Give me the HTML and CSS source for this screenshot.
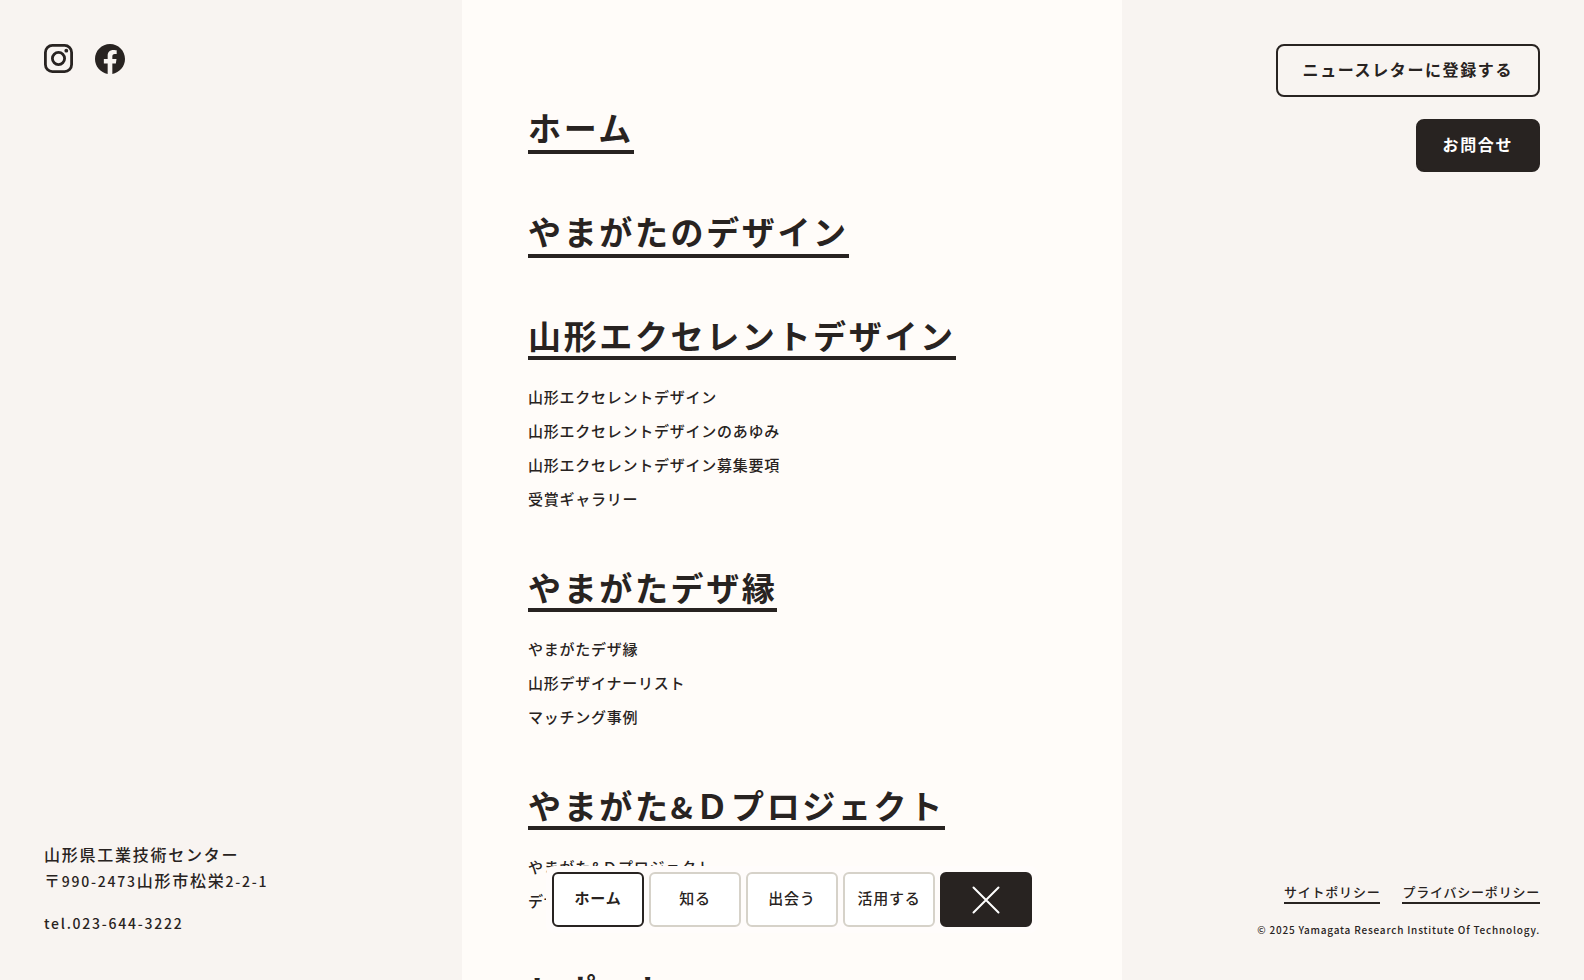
FILE: index.html
```html
<!DOCTYPE html>
<html lang="ja">
<head>
  <meta charset="UTF-8" />
  <meta name="viewport" content="width=device-width, initial-scale=1.0" />
  <title>やまがたのデザイン</title>
  <link rel="stylesheet" href="styles.css">
</head>
<body>
  <div class="page">
    <aside class="side side-left">
      <div class="sns">
        <a href="#" aria-label="Instagram">
          <svg class="icon-instagram" viewBox="0 0 29 29" fill="none" stroke="currentColor">
            <rect x="1.4" y="1.4" width="26.2" height="26.2" rx="7" stroke-width="2.8"/>
            <circle cx="14.5" cy="14.5" r="6.1" stroke-width="2.8"/>
            <circle cx="22.3" cy="6.7" r="1.9" fill="currentColor" stroke="none"/>
          </svg>
        </a>
        <a href="#" aria-label="Facebook">
          <svg class="icon-facebook" viewBox="0 0 24 24" fill="currentColor">
            <path d="M24 12.073c0-6.627-5.373-12-12-12s-12 5.373-12 12c0 5.99 4.388 10.954 10.125 11.854v-8.385H7.078v-3.47h3.047V9.43c0-3.007 1.792-4.669 4.533-4.669 1.312 0 2.686.235 2.686.235v2.953H15.83c-1.491 0-1.956.925-1.956 1.874v2.25h3.328l-.532 3.47h-2.796v8.385C19.612 23.027 24 18.062 24 12.073z"/>
          </svg>
        </a>
      </div>
      <address class="address">
        <p>山形県工業技術センター<br>〒<span class="latin">990-2473</span>山形市松栄<span class="latin">2-2-1</span></p>
        <p><span class="latin">tel.023-644-3222</span></p>
      </address>
    </aside>

    <main class="menu">
      <ul class="menu-list">
        <li><a class="menu-title" href="#">ホーム</a></li>
        <li><a class="menu-title" href="#">やまがたのデザイン</a></li>
        <li>
          <a class="menu-title has-sub" href="#">山形エクセレントデザイン</a>
          <ul class="sub-list">
            <li><a href="#">山形エクセレントデザイン</a></li>
            <li><a href="#">山形エクセレントデザインのあゆみ</a></li>
            <li><a href="#">山形エクセレントデザイン募集要項</a></li>
            <li><a href="#">受賞ギャラリー</a></li>
          </ul>
        </li>
        <li>
          <a class="menu-title has-sub" href="#">やまがたデザ縁</a>
          <ul class="sub-list">
            <li><a href="#">やまがたデザ縁</a></li>
            <li><a href="#">山形デザイナーリスト</a></li>
            <li><a href="#">マッチング事例</a></li>
          </ul>
        </li>
        <li>
          <a class="menu-title has-sub" href="#">やまがた<span class="amp">&amp;</span>Ｄプロジェクト</a>
          <ul class="sub-list">
            <li><a href="#">やまがた&amp;Ｄプロジェクト</a></li>
            <li><a href="#">デザイン</a></li>
          </ul>
        </li>
        <li><a class="menu-title" href="#">レポート</a></li>
      </ul>
    </main>

    <aside class="side side-right">
      <div class="actions">
        <a class="button" href="#">ニュースレターに登録する</a>
        <a class="button button-dark" href="#">お問合せ</a>
      </div>
      <footer class="footer">
        <div class="policy">
          <a href="#">サイトポリシー</a>
          <a href="#">プライバシーポリシー</a>
        </div>
        <small>© 2025 Yamagata Research Institute Of Technology.</small>
      </footer>
    </aside>
  </div>

  <nav class="tabbar">
    <a class="tab is-current" href="#">ホーム</a>
    <a class="tab" href="#">知る</a>
    <a class="tab" href="#">出会う</a>
    <a class="tab" href="#">活用する</a>
    <button class="tab tab-close" type="button" aria-label="メニューを閉じる">
      <svg viewBox="0 0 28 28" fill="none" stroke="currentColor" stroke-width="2" stroke-linecap="round">
        <path d="M1.5 1.5 26.5 26.5M26.5 1.5 1.5 26.5"/>
      </svg>
    </button>
  </nav>
</body>
</html>
```
FILE: styles.css
```css
* {
  box-sizing: border-box;
}

body {
  margin: 0;
  font-family: "Noto Sans CJK JP", sans-serif;
  font-weight: 500;
  font-size: 16px;
  letter-spacing: 0.1em;
  color: #282321;
  background-color: #f8f4f1;
}

a {
  color: inherit;
  text-decoration: none;
}

ul {
  list-style: none;
  margin: 0;
  padding: 0;
}

.page {
  display: grid;
  grid-template-columns: 7fr 10fr 7fr;
  height: 100vh;
  overflow: hidden;
}

/* side columns */
.side {
  display: flex;
  flex-direction: column;
  justify-content: space-between;
  padding: 44px;
}

.side-right {
  align-items: flex-end;
  padding-bottom: 42px;
}

.sns {
  display: flex;
  gap: 22px;
}

.sns svg {
  display: block;
}

.icon-instagram {
  width: 29px;
  height: 29px;
}

.icon-facebook {
  width: 30px;
  height: 30px;
}

.address {
  font-style: normal;
  line-height: 26px;
  letter-spacing: 0.11em;
}

.address p {
  margin: 0;
}

.address p + p {
  margin-top: 15px;
}

.latin {
  font-size: 14px;
}

.actions {
  display: flex;
  flex-direction: column;
  align-items: flex-end;
  gap: 22px;
}

.button {
  padding: 11px 25px 13px;
  border: 2px solid #282321;
  border-radius: 8px;
  font-weight: 700;
  line-height: 25px;
  white-space: nowrap;
}

.button-dark {
  background-color: #282321;
  color: #fff;
}

.footer {
  display: flex;
  flex-direction: column;
  align-items: flex-end;
  gap: 18px;
}

.policy {
  display: flex;
  gap: 22px;
}

.policy a {
  border-bottom: 2px solid #282321;
  font-size: 13px;
  line-height: 20px;
  letter-spacing: 0.06em;
  white-space: nowrap;
}

.footer small {
  font-size: 10px;
  line-height: 16px;
  letter-spacing: 0.08em;
  white-space: nowrap;
}

/* menu */
.menu {
  padding: 110px 66px 0;
  background-color: #fffcf9;
  overflow: hidden;
}

.menu-list {
  display: flex;
  flex-direction: column;
  gap: 60px;
}

.menu-title {
  display: block;
  width: fit-content;
  padding-bottom: 6px;
  border-bottom: 4px solid #282321;
  font-size: 33px;
  font-weight: 700;
  line-height: 34px;
  letter-spacing: 0.08em;
  white-space: nowrap;
}

.has-sub {
  padding-bottom: 4px;
}

.amp {
  font-size: 30px;
  line-height: 1;
}

.sub-list {
  display: flex;
  flex-direction: column;
  gap: 12px;
  margin-top: 26px;
  font-size: 15px;
  line-height: 22px;
  letter-spacing: 0.05em;
}

.sub-list a {
  display: block;
}

/* bottom bar, stays over the menu */
.tabbar {
  position: fixed;
  bottom: 47px;
  left: 50%;
  transform: translateX(-50%);
  display: flex;
  gap: 5px;
  padding: 6px;
  border-radius: 8px;
  background-color: #fffcfb;
}

.tab {
  display: flex;
  align-items: center;
  justify-content: center;
  width: 92px;
  height: 55px;
  padding: 0 0 4px;
  border: 2px solid #d6d2c9;
  border-radius: 6px;
  background-color: #fff;
  font-size: 15px;
  letter-spacing: 0.05em;
}

.is-current {
  border-color: #282321;
  font-weight: 700;
}

.tab-close {
  padding: 0;
  border-color: #282321;
  background-color: #282321;
  color: #fff;
  cursor: pointer;
}

.tab-close svg {
  width: 28px;
  height: 28px;
}
```
